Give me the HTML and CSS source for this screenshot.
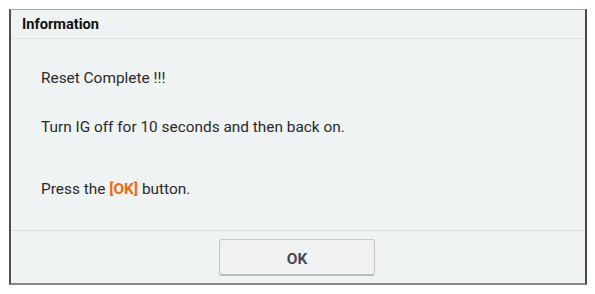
FILE: index.html
```html
<!DOCTYPE html>
<html>
<head>
<meta charset="utf-8">
<link rel="stylesheet" href="styles.css">
</head>
<body>
<div class="dialog">
  <div class="header">Information</div>
  <div class="body">
    <p class="line l1">Reset Complete !!!</p>
    <p class="line l2">Turn IG off for 10 seconds and then back on.</p>
    <p class="line l3">Press the <span class="hl">[OK]</span> button.</p>
  </div>
  <div class="footer">
    <button class="ok">OK</button>
  </div>
</div>
</body>
</html>
```
FILE: styles.css
```css
html, body {
  margin: 0;
  padding: 0;
  background: #ffffff;
  width: 595px;
  height: 294px;
  overflow: hidden;
}
.dialog {
  margin: 9px 0 0 9px;
  width: 574px;
  height: 273px;
  background: #f0f3f4;
  border-top: 1px solid #a8a8a8;
  border-left: 2px solid #4e4e58;
  border-right: 2px solid #4a4a4a;
  border-bottom: 2px solid #8c8686;
  display: flex;
  flex-direction: column;
  font-family: Roboto, "Liberation Sans", sans-serif;
  color: #2a2a2a;
}
.header {
  height: 28px;
  border-bottom: 1px solid #dfe1e3;
  font-weight: bold;
  font-size: 14.6px;
  line-height: 28px;
  padding-left: 11px;
  color: #111;
}
.body {
  flex: 1;
  padding-left: 30px;
  font-size: 15.4px;
}
.line {
  margin: 0;
  line-height: 18px;
}
.l1 { margin-top: 30px; }
.l2 { margin-top: 31px; }
.l3 { margin-top: 44px; }
.hl {
  color: #f26a10;
  font-weight: bold;
}
.footer {
  height: 53px;
  border-top: 1px solid #dcdcdf;
  display: flex;
  justify-content: center;
  padding-top: 8px;
  box-sizing: border-box;
}
.ok {
  width: 156px;
  height: 37px;
  margin-left: -2px;
  padding-top: 4px;
  background: #eff1f2;
  border: 1px solid #c8c8c8;
  border-bottom: 2px solid #bcbcbc;
  border-radius: 3px;
  font-family: Roboto, "Liberation Sans", sans-serif;
  font-weight: bold;
  font-size: 15.5px;
  color: #4a4a55;
}
```
